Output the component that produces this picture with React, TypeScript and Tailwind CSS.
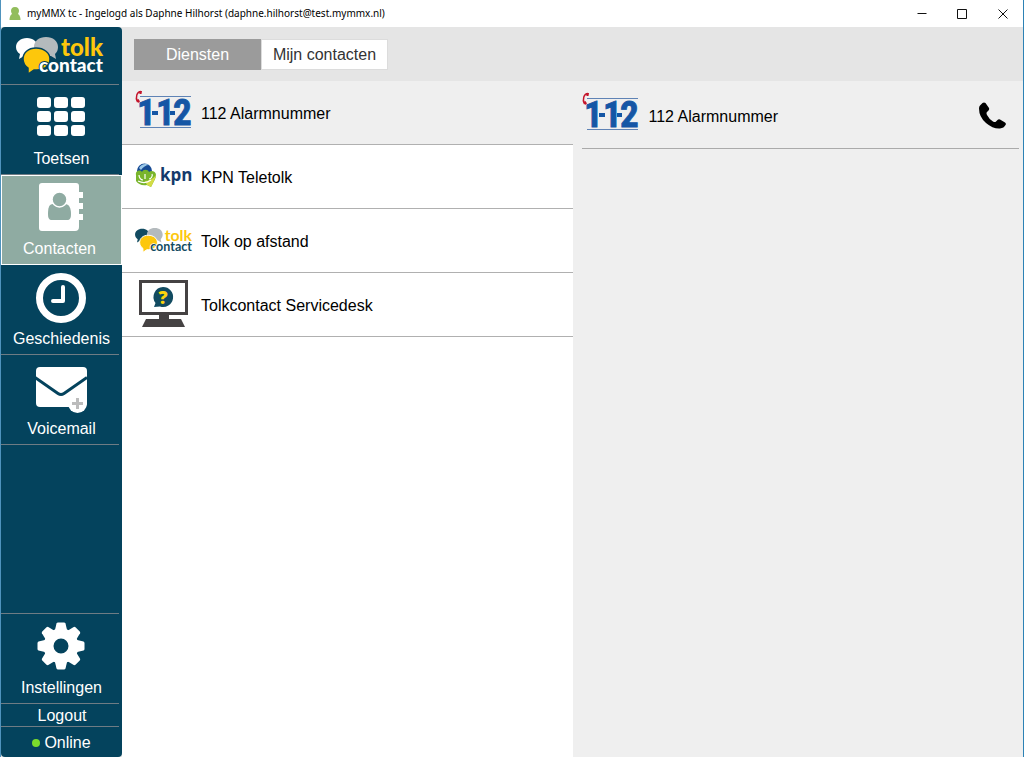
import React from "react";

type LogoProps = { className: string; left: string; text: string; gap: string; weight: number };

function TolkContactLogo({ className, left, text, gap, weight }: LogoProps) {
  return (
    <svg viewBox="0 0 88 38" className={className} role="img" aria-label="tolk contact">
      <path d="M11 1C4.500 1 0 5 0 10c0 3 1.500 5.500 4 7l-1 5 5-3h4c6 0 10-4 10-9S17 1 11 1z" fill={left} />
      <path d="M30 0c-7 0-12 4-12 10 0 5 5 9 12 9l5 0 5 3-1-5c2-2 3-4 3-7 0-6-5-10-12-10z" fill="#b4babd" />
      <path
        d="M20 11C12 11 7 16 7 22c0 4 2 7 5 9v6l6-4h3c8 0 13-5 13-11S28 11 20 11z"
        fill="#fdc70c"
        stroke={gap}
        strokeWidth="1.500"
      />
      <text x="45" y="19" fontFamily="Lato, sans-serif" fontWeight={weight} fontSize="24" fill="#fdc70c">
        tolk
      </text>
      <text
        x="23"
        y="35"
        fontFamily="Lato, sans-serif"
        fontWeight={weight}
        fontSize="19"
        fill={text}
        stroke={gap}
        strokeWidth="2"
        paintOrder="stroke"
      >
        contact
      </text>
    </svg>
  );
}

function AlarmLogo() {
  return (
    <svg viewBox="0 0 58 40" className="mb-[6px] h-10 w-[58px] overflow-visible" role="img" aria-label="1-1-2">
      <path d="M5 6.500H56M5 37.500H56" stroke="#5f83b5" strokeWidth="1" />
      <path d="M6 1.500C2 1.500 0 7 2.500 12" fill="none" stroke="#c4142b" strokeWidth="1.500" />
      <path d="M4 1l3 0-.5 3-2 0zM1.500 10l2-1 1.500 2.500-2 1.500z" fill="#c4142b" />
      <text
        x="2 21 38"
        y="35"
        fontFamily="'Roboto Condensed', Roboto, sans-serif"
        fontWeight="700"
        fontSize="37"
        fill="#1556a5"
        stroke="#1556a5"
        strokeWidth="0.8"
      >
        112
      </text>
      <path d="M17 21h6v4h-6zM35 21h5v4h-5z" fill="#1556a5" />
    </svg>
  );
}

function KpnLogo() {
  return (
    <svg viewBox="0 0 58 26" className="mb-[2px] h-[26px] w-[58px]" role="img" aria-label="kpn">
      <circle cx="9.500" cy="8" r="7.500" fill="#164a94" />
      <path d="M4 5c2-4 7-5 10-3-3 0-6 2-8 5z" fill="#9cc9e8" />
      <path d="M1 12c-1-4 4-6 6-3 1-3 6-3 7 0 2-2 7-1 7 3 0 3-2 6-3 8l-2 4-4-2c-5 1-9-1-11-4z" fill="#79b52c" />
      <path d="M10 18c4 0 8-2 11-6-1 4-2 6-3 8l-2 4-4-2z" fill="#d3dc45" />
      <path d="M4 12c0 3 2 5 4 5M10 11v5M17 11c1 2-1 5-3 5M3 18c4 2 9 2 13-1" fill="none" stroke="#fff" strokeWidth="1.200" />
      <text x="25" y="18" fontFamily="'Open Sans', sans-serif" fontWeight="700" fontSize="17" fill="#143a6b">
        kpn
      </text>
    </svg>
  );
}

function ServicedeskLogo() {
  return (
    <svg viewBox="0 0 50 48" className="mb-[2px] ml-1 h-12 w-[50px]" role="img" aria-label="Servicedesk">
      <path d="M1.500 1.500h46v32h-46z" fill="#fff" stroke="#454243" strokeWidth="3" />
      <path d="M20 35h10v4h12l4 8H3l4-8h13z" fill="#454243" />
      <path d="M24 7a10 10 0 1 1-3 19.500L15 27l1.500-4A10 10 0 0 1 24 7z" fill="#124b61" />
      <text x="24" y="24" textAnchor="middle" fontFamily="'Open Sans', sans-serif" fontWeight="800" fontSize="18" fill="#fdd40c">
        ?
      </text>
    </svg>
  );
}

function KeypadIcon() {
  return (
    <svg viewBox="0 0 52 52" className="size-[52px]" fill="#fff" aria-hidden="true">
      {[6, 20, 34].map((y) => [2, 19, 36].map((x) => <rect key={`${x}-${y}`} x={x} y={y} width="14" height="11" rx="3" />))}
    </svg>
  );
}

function ContactsIcon() {
  return (
    <svg viewBox="0 0 52 52" className="size-[52px]" aria-hidden="true">
      <path d="M8 2h34a3 3 0 0 1 3 3v6h4v6h-4v5h4v6h-4v5h4v6h-4v7a4 4 0 0 1-4 4H8a3 3 0 0 1-3-3V5a3 3 0 0 1 3-3z" fill="#fff" />
      <path d="M19 23h12c4 0 6 4 6 10 0 4-1 6-4 6H18c-3 0-4-2-4-6 0-6 1-10 5-10z" fill="#8faba2" />
      <circle cx="25.500" cy="18.500" r="7.500" fill="#8faba2" stroke="#fff" strokeWidth="1.500" />
    </svg>
  );
}

function ClockIcon() {
  return (
    <svg viewBox="0 0 52 52" className="size-[52px]" fill="none" stroke="#fff" aria-hidden="true">
      <circle cx="26" cy="27" r="21.500" strokeWidth="7" />
      <path d="M28 16v14H18" strokeWidth="4" strokeLinecap="round" strokeLinejoin="round" />
    </svg>
  );
}

function VoicemailIcon() {
  return (
    <svg viewBox="0 0 52 52" className="size-[52px]" aria-hidden="true">
      <rect x="1" y="6" width="51" height="40" rx="4" fill="#fff" />
      <path d="M0 16.500L23 32.500q3 2 6 0L52 16.500" fill="none" stroke="#04435d" strokeWidth="3" />
      <circle cx="42.500" cy="42.500" r="9.500" fill="#fff" />
      <path d="M42.500 37v11M37 42.500h11" stroke="#bcbcbc" strokeWidth="3" />
    </svg>
  );
}

function GearIcon() {
  return (
    <svg viewBox="0 0 52 52" className="size-[52px]" aria-hidden="true">
      {[0, 45, 90, 135, 180, 225, 270, 315].map((a) => (
        <path key={a} d="M19.500 12L21.500 3.500Q22 2.500 23 2.500h6q1 0 1.500 1L32.500 12z" fill="#fff" transform={`rotate(${a} 26 26)`} />
      ))}
      <circle cx="26" cy="26" r="12.500" fill="none" stroke="#fff" strokeWidth="10" />
    </svg>
  );
}

function PhoneIcon() {
  return (
    <svg viewBox="0 0 27 27" className="size-[27px]" aria-hidden="true">
      <path d="M1 3.500L3.500 1Q5 0 6.500 1l3.500 5q.5 1.500-.5 2.500L8 10q-1 1 0 3 2 4 6 6.500 2 1 3 0l1.500-1.500q1-1 2.500-.5l5 3q1.500 1 .5 2.500Q25 26 21 26.500 14 27 7 21 0 15 0 6.500 0 4.500 1 3.500z" />
    </svg>
  );
}

type NavProps = { label: string; icon: React.ReactNode; active?: boolean };

function NavItem({ label, icon, active }: NavProps) {
  return (
    <button
      type="button"
      aria-current={active ? "page" : undefined}
      className={
        active
          ? "flex w-full flex-col items-center gap-1 border border-white bg-[#8faba2] pt-[5px] pr-1 pb-[3px] leading-6 text-white"
          : "mr-[3px] flex flex-col items-center gap-1 self-stretch border-b border-[#6f7c84] pt-[6px] pb-[3px] pl-px leading-6 text-white"
      }
    >
      {icon}
      <span className={active ? "" : "pl-[2px]"}>{label}</span>
    </button>
  );
}

const services = [
  { name: "112 Alarmnummer", logo: <AlarmLogo /> },
  { name: "KPN Teletolk", logo: <KpnLogo /> },
  {
    name: "Tolk op afstand",
    logo: (
      <TolkContactLogo className="h-[25px] w-[58px] overflow-visible" left="#124b61" text="#124b61" gap="#fff" weight={700} />
    ),
  },
  { name: "Tolkcontact Servicedesk", logo: <ServicedeskLogo /> },
];

export default function App() {
  return (
    <div className="flex min-h-screen flex-col border-r border-l border-r-[#2d82b5] border-l-[#4f93bd] bg-white font-['Liberation_Sans',Arial,sans-serif] text-base text-black">
      <header className="flex h-[27px] items-center justify-between pl-2">
        <div className="flex items-center gap-[6px]">
          <svg viewBox="0 0 12 14" className="h-[14px] w-3" fill="#92bd5c" aria-hidden="true">
            <path d="M6 0c3 0 4 2 4 4 0 1-.5 2-1 3 2 1 2.500 4 2.500 6H.5c0-2 .5-5 2.500-6-.5-1-1-2-1-3 0-2 1-4 4-4z" />
          </svg>
          <h1 className="font-['Noto_Sans',sans-serif] text-[10px]">
            myMMX tc - Ingelogd als Daphne Hilhorst (daphne.hilhorst@test.mymmx.nl)
          </h1>
        </div>
        <div className="flex h-full">
          <button type="button" aria-label="Minimaliseren" className="flex w-10 items-center justify-center">
            <svg viewBox="0 0 10 10" className="size-[10px]" stroke="#111"><path d="M.5 4.500h9" /></svg>
          </button>
          <button type="button" aria-label="Maximaliseren" className="flex w-10 items-center justify-center">
            <svg viewBox="0 0 10 10" className="size-[10px]" fill="none" stroke="#111"><path d="M.5.500h9v9h-9z" /></svg>
          </button>
          <button type="button" aria-label="Sluiten" className="flex w-[41px] items-center justify-center">
            <svg viewBox="0 0 10 10" className="size-[10px]" stroke="#111"><path d="M.5.500l9 9M9.500.500l-9 9" /></svg>
          </button>
        </div>
      </header>

      <div className="flex grow bg-[#e5e5e5]">
        <nav className="flex w-[121px] shrink-0 flex-col rounded bg-[#04435d]">
          <div className="mr-[3px] flex h-[58px] items-center border-b border-[#6f7c84] pl-[15px]">
            <TolkContactLogo className="h-[38px] w-[88px] overflow-visible" left="#fff" text="#fff" gap="#04435d" weight={900} />
          </div>
          <NavItem label="Toetsen" icon={<KeypadIcon />} />
          <NavItem label="Contacten" icon={<ContactsIcon />} active />
          <NavItem label="Geschiedenis" icon={<ClockIcon />} />
          <NavItem label="Voicemail" icon={<VoicemailIcon />} />
          <div className="mr-[3px] grow border-b border-[#6f7c84]" />
          <NavItem label="Instellingen" icon={<GearIcon />} />
          <button type="button" className="mr-[3px] h-[23px] border-b border-[#6f7c84] pt-px pl-1 leading-[22px] text-white">
            Logout
          </button>
          <div className="flex h-[30px] items-center justify-center gap-1 pt-[2px] text-white">
            <span className="size-2 rounded-full bg-[#7bdc2c]" />
            Online
          </div>
        </nav>

        <main className="flex grow flex-col">
          <div className="flex h-[54px] items-center px-3">
            <button type="button" className="h-[31px] w-[127px] bg-[#9b9b9b] pt-[2px] text-white">
              Diensten
            </button>
            <button type="button" className="h-[31px] w-[127px] border border-[#dcdcdc] bg-white pt-[2px] text-[#333]">
              Mijn contacten
            </button>
          </div>
          <div className="grid grow grid-cols-2">
            <ul className="bg-white">
              {services.map((s, i) => (
                <li key={s.name}>
                  <button
                    type="button"
                    className={
                      i === 0
                        ? "flex h-16 w-full items-center border-b border-[#b0b0b0] bg-[#efefef] pl-[13px] text-left"
                        : "flex h-16 w-full items-center border-b border-[#b0b0b0] pl-[13px] text-left"
                    }
                  >
                    <span className="w-[66px] shrink-0">{s.logo}</span>
                    <span className="pt-[2px]">{s.name}</span>
                  </button>
                </li>
              ))}
            </ul>
            <section className="bg-[#efefef] pr-1 pl-[9px]">
              <div className="flex h-[68px] items-center border-b border-[#aaa]">
                <span className="w-[67px] shrink-0"><AlarmLogo /></span>
                <h2 className="grow pt-1">112 Alarmnummer</h2>
                <button type="button" aria-label="Bellen" className="mr-[13px] pt-[2px]"><PhoneIcon /></button>
              </div>
            </section>
          </div>
        </main>
      </div>
    </div>
  );
}
